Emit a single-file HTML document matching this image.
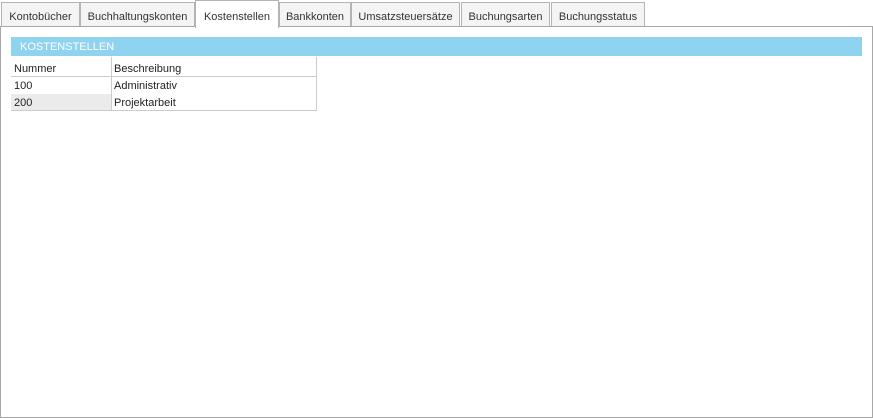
<!DOCTYPE html>
<html><head><style>
body{margin:0;width:873px;height:418px;background:#fff;font-family:"Liberation Sans",sans-serif;font-size:11px;color:#222;position:relative;overflow:hidden}
.tab{position:absolute;top:2px;height:23px;border:1px solid #b4b4b4;border-bottom:none;background:#f4f4f4;line-height:29px;text-align:center;color:#333}
.tab.a{top:0;height:27px;background:#fff;z-index:2;line-height:33px}
.panel{position:absolute;left:0;top:26px;width:871px;height:390px;border:1px solid #a8a8a8}
.hb{position:absolute;left:11px;top:37px;width:851px;height:19px;background:#8fd3f1;color:#fff;line-height:21px;text-indent:9px}
.c{position:absolute;height:17px;line-height:17px;padding-left:2px}
</style></head><body>
<div class="panel"></div>
<div class="tab" style="left:1px;width:77px">Kontobücher</div>
<div class="tab" style="left:80px;width:113px">Buchhaltungskonten</div>
<div class="tab a" style="left:195px;width:82px">Kostenstellen</div>
<div class="tab" style="left:279px;width:70px">Bankkonten</div>
<div class="tab" style="left:351px;width:107px">Umsatzsteuersätze</div>
<div class="tab" style="left:461px;width:87px">Buchungsarten</div>
<div class="tab" style="left:551px;width:92px">Buchungsstatus</div>
<div class="hb">KOSTENSTELLEN</div>
<div style="position:absolute;left:11px;top:57px;width:305px;height:53px;border-right:1px solid #ccc;border-bottom:1px solid #ccc"></div>
<div style="position:absolute;left:11px;top:76px;width:306px;height:1px;background:#ccc"></div>
<div style="position:absolute;left:111px;top:57px;width:1px;height:54px;background:#ccc"></div>
<div style="position:absolute;left:11px;top:94px;width:100px;height:16px;background:#ebebeb"></div>
<div class="c" style="left:12px;top:61px">Nummer</div>
<div class="c" style="left:112px;top:61px">Beschreibung</div>
<div class="c" style="left:12px;top:78px">100</div>
<div class="c" style="left:112px;top:78px">Administrativ</div>
<div class="c" style="left:12px;top:95px">200</div>
<div class="c" style="left:112px;top:95px">Projektarbeit</div>
</body></html>
